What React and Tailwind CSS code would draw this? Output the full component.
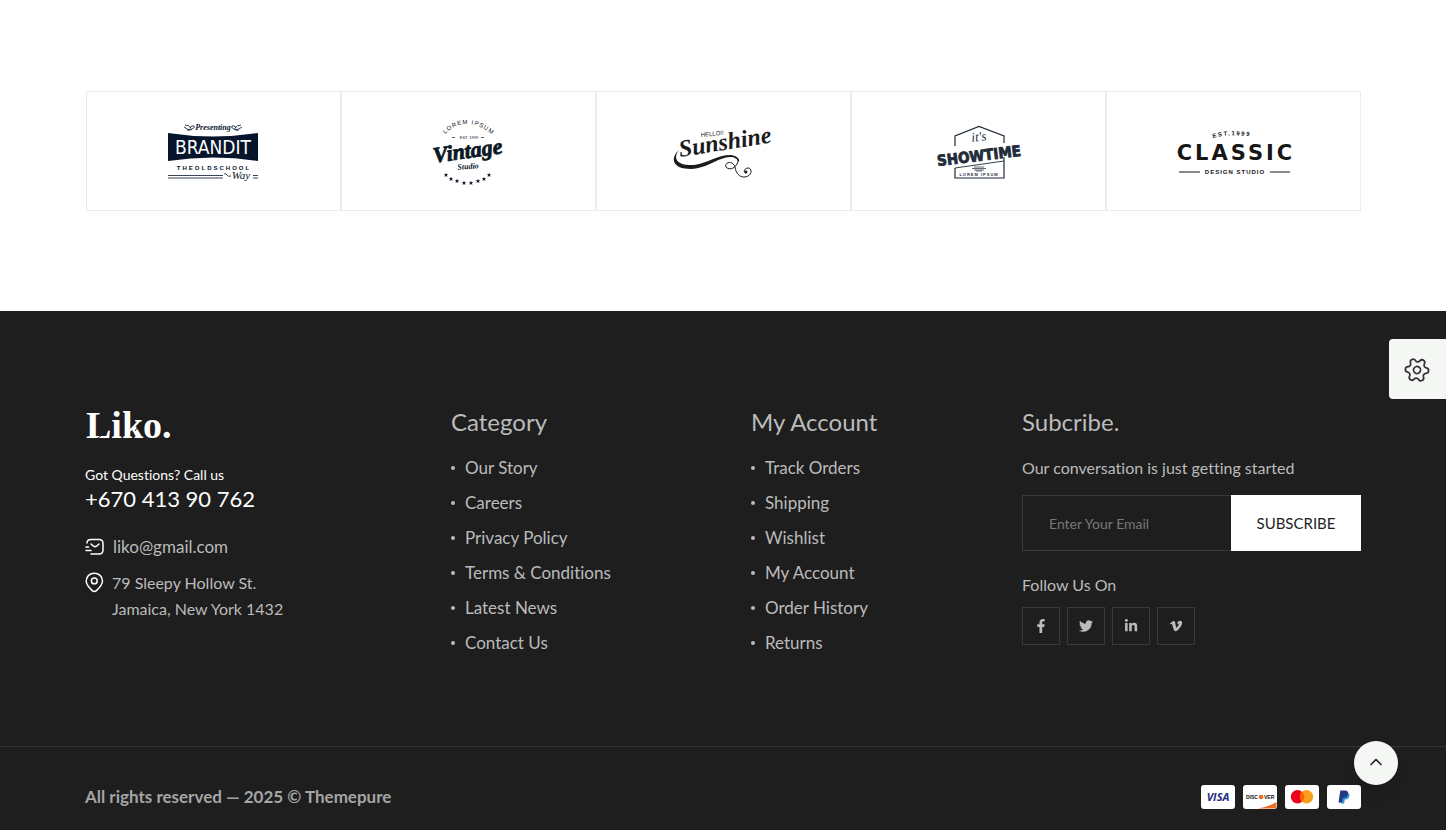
import { Settings, ChevronUp } from 'lucide-react';
import { FaFacebookF, FaTwitter, FaLinkedinIn, FaVimeoV } from 'react-icons/fa';

const categoryLinks = ['Our Story', 'Careers', 'Privacy Policy', 'Terms & Conditions', 'Latest News', 'Contact Us'];
const accountLinks = ['Track Orders', 'Shipping', 'Wishlist', 'My Account', 'Order History', 'Returns'];

const socials = [
  { label: 'Facebook', Icon: FaFacebookF },
  { label: 'Twitter', Icon: FaTwitter },
  { label: 'LinkedIn', Icon: FaLinkedinIn },
  { label: 'Vimeo', Icon: FaVimeoV },
];

const STAR = 'M0 -2.2 L0.6 -0.7 L2.2 -0.7 L1 0.3 L1.4 2 L0 1 L-1.4 2 L-1 0.3 L-2.2 -0.7 L-0.6 -0.7 Z';
const stars = [[26, 65], [31, 69], [37, 71], [44, 73], [51, 73], [58, 71], [64, 69], [69, 65]];

function BrandIt() {
  return (
    <svg width="130" height="85" viewBox="0 0 130 85" fill="#06152b">
      <text x="63" y="20" textAnchor="middle" className="font-['Liberation_Serif',serif] text-[8px] font-bold italic">Presenting</text>
      <g fill="none" stroke="#06152b" strokeWidth="0.8">
        <path d="M34 17 q4 4 8 2 q4 -2 2 -3 q-3 -1 -4 2 M35 15 q4 0 6 3 M37 20 q3 1 5 -1" />
        <path d="M92 17 q-4 4 -8 2 q-4 -2 -2 -3 q3 -1 4 2 M91 15 q-4 0 -6 3 M89 20 q-3 1 -5 -1" />
      </g>
      <path d="M18 23 Q63 30 108 23 V51 Q63 44 18 51 Z" />
      <text x="63" y="44" textAnchor="middle" fill="#fff" className="font-['DejaVu_Sans_Condensed',sans-serif] text-[19px]">BRANDIT</text>
      <text x="64" y="60" textAnchor="middle" letterSpacing="2" className="font-['Liberation_Sans',sans-serif] text-[6px] font-bold">THEOLDSCHOOL</text>
      <path d="M18 65.500 H73 M18 68 H73 M103 65.500 H108 M103 68 H108" stroke="#06152b" strokeWidth="0.8" />
      <path d="M74 64 q2 -1 3 1 q1 2 4 1" fill="none" stroke="#06152b" strokeWidth="0.8" />
      <text x="91" y="69" textAnchor="middle" className="font-['Liberation_Serif',serif] text-[11px] italic">Way</text>
    </svg>
  );
}

function Vintage() {
  return (
    <svg width="100" height="85" viewBox="0 0 100 85" fill="#0b1724">
      <defs>
        <path id="vintage-arc" d="M25 24 Q48 2 76 28" />
      </defs>
      <text letterSpacing="1" className="font-['Liberation_Sans',sans-serif] text-[6px]">
        <textPath href="#vintage-arc">LOREM IPSUM</textPath>
      </text>
      <text x="49" y="29" textAnchor="middle" className="font-['Liberation_Sans',sans-serif] text-[4px]">EST. 1999</text>
      <path d="M32 27.500 H35 M61 27.500 H64" stroke="#0b1724" strokeWidth="0.7" />
      <text x="48" y="48" textAnchor="middle" transform="rotate(-8 48 44)" stroke="#0b1724" strokeWidth="0.8" className="font-['Liberation_Serif',serif] text-[22px] font-bold italic">Vintage</text>
      <text x="48" y="59" textAnchor="middle" transform="rotate(-4 48 56)" className="font-['Liberation_Serif',serif] text-[8px] font-bold italic">Studio</text>
      {stars.map(([x, y]) => <path key={x} d={STAR} transform={`translate(${x} ${y})`} />)}
    </svg>
  );
}

function Sunshine() {
  return (
    <svg width="130" height="80" viewBox="0 0 130 80" fill="#1b1b1b">
      <text x="41" y="25" transform="rotate(-6 41 25)" className="font-['Liberation_Sans',sans-serif] text-[6px]">HELLO!!</text>
      <text x="20" y="45" transform="rotate(-9 20 45)" className="font-['Liberation_Serif',serif] text-[24px] font-bold italic">Sunshine</text>
      <path d="M19 38 C12 47 18 54 34 53 C49 51 56 43 71 43 C77 44 80 47 79 50 C77 47 75 45 70 45 C56 46 49 56 31 57 C12 57 10 46 19 38 Z" />
      <path d="M78 47 C79 54 70 60 66 55 C64 50 73 48 75 55 C76 62 80 65 84 65 C92 65 93 56 88 56 C84 56 83 61 86 61" fill="none" stroke="#1b1b1b" strokeWidth="1" />
      <circle cx="86" cy="60" r="1.400" />
    </svg>
  );
}

function Showtime() {
  return (
    <svg width="110" height="85" viewBox="0 0 110 85" fill="#1f2b3a">
      <path d="M30 36 V26 L54 16.500 L79 26 V33 M79 47 V68 H30 V58" fill="none" stroke="#1f2b3a" strokeWidth="1.200" />
      <text x="54" y="31" textAnchor="middle" transform="rotate(-6 54 28)" className="font-['Liberation_Serif',serif] text-[13px] italic">it's</text>
      <text x="54" y="51" textAnchor="middle" transform="rotate(-7 54 46)" stroke="#1f2b3a" strokeWidth="0.8" className="font-['DejaVu_Sans_Condensed',sans-serif] text-[15px] font-bold">SHOWTIME</text>
      <path d="M30 58 L79 51" fill="none" stroke="#1f2b3a" strokeWidth="0.9" />
      <path d="M47 58.500 H61 M49 57 H59 M49 60 H59 M51 61 H57" stroke="#1f2b3a" strokeWidth="0.7" />
      <text x="54" y="66" textAnchor="middle" letterSpacing="1" className="font-['Liberation_Sans',sans-serif] text-[4px] font-bold">LOREM IPSUM</text>
    </svg>
  );
}

function Classic() {
  return (
    <svg width="150" height="75" viewBox="0 0 150 75" fill="#161616">
      <defs>
        <path id="classic-arc" d="M53 23 Q74 17 104 24" />
      </defs>
      <text letterSpacing="1.500" className="font-['Liberation_Sans',sans-serif] text-[6px] font-bold">
        <textPath href="#classic-arc">EST.1999</textPath>
      </text>
      <text x="76" y="45" textAnchor="middle" letterSpacing="3" className="font-['DejaVu_Sans',sans-serif] text-[21px] font-bold">CLASSIC</text>
      <text x="75" y="59" textAnchor="middle" letterSpacing="1" className="font-['Liberation_Sans',sans-serif] text-[6px] font-bold">DESIGN STUDIO</text>
      <path d="M19 57 H40 M110 57 H130" stroke="#161616" strokeWidth="1" />
    </svg>
  );
}

const brands = [BrandIt, Vintage, Sunshine, Showtime, Classic];

function Logo() {
  return (
    <svg width="96" height="50" viewBox="0 0 96 50" role="img" aria-label="Liko.">
      <text x="1" y="40" fill="#fff" className="font-['Liberation_Serif',serif] text-[38px] font-bold">Liko.</text>
      <path d="M13 40 L25 31 M50 33 L59 22" stroke="#1e1e1e" strokeWidth="1" />
    </svg>
  );
}

function MailIcon() {
  return (
    <svg width="20" height="18" viewBox="0 0 20 18" fill="none" stroke="#fff" strokeWidth="1.500" strokeLinecap="round" strokeLinejoin="round">
      <path d="M2 5 C2 2.500 3.500 1.500 6 1.500 H14 C16.500 1.500 18 3 18 5.500 V12 C18 14.500 16.500 16 14 16 H6" />
      <path d="M14 6 L11.500 8.200 C10.700 8.800 9.400 8.800 8.600 8.200 L6 6 M1 12.500 H6 M1 9 H3.500" />
    </svg>
  );
}

function PinIcon() {
  return (
    <svg width="19" height="21" viewBox="0 0 19 21" fill="none" stroke="#fff" strokeWidth="1.500" className="mt-0.5">
      <path d="M9.300 19.500 C8.500 19.500 7.800 19.200 7.200 18.600 C3.800 15.300 1.200 12.600 1.200 8.900 C1.200 4.500 4.800 1.200 9.300 1.200 C13.800 1.200 17.500 4.500 17.500 8.900 C17.500 12.600 14.900 15.300 11.400 18.600 C10.800 19.200 10.100 19.500 9.300 19.500 Z" />
      <circle cx="9.300" cy="8.900" r="2.900" />
    </svg>
  );
}

function LinkColumn({ title, links }) {
  return (
    <div>
      <h4 className="mb-3 text-[24px] leading-8">{title}</h4>
      <ul>
        {links.map(link => (
          <li key={link} className="flex h-[35px] items-center gap-[10px]">
            <span className="h-1 w-1 rounded-full bg-[#bbb]" />
            <a href="#" className="text-[17px]">{link}</a>
          </li>
        ))}
      </ul>
    </div>
  );
}

function Payments() {
  return (
    <div className="flex gap-2">
      <svg width="34" height="24" viewBox="0 0 34 24">
        <rect width="34" height="24" rx="3" fill="#fff" />
        <text x="17" y="16" textAnchor="middle" fill="#232c81" className="font-['Open_Sans',sans-serif] text-[11px] font-bold italic">VISA</text>
      </svg>
      <svg width="34" height="24" viewBox="0 0 34 24">
        <rect width="34" height="24" rx="3" fill="#fff" />
        <path d="M15 23.500 Q27 21.500 33.500 17 V21 Q33.500 23.500 31 23.500 Z" fill="#ee6b22" />
        <text x="3" y="14" fill="#111" className="font-['Liberation_Sans',sans-serif] text-[5px] font-bold">DISC</text>
        <circle cx="18" cy="12" r="2.300" fill="#ee6b22" />
        <text x="21" y="14" fill="#111" className="font-['Liberation_Sans',sans-serif] text-[5px] font-bold">VER</text>
      </svg>
      <svg width="34" height="24" viewBox="0 0 34 24">
        <rect width="34" height="24" rx="3" fill="#fff" />
        <circle cx="12.500" cy="11.700" r="6.700" fill="#eb001b" />
        <circle cx="21.500" cy="11.700" r="6.700" fill="#f79e1b" />
        <path d="M17 6.700 A6.700 6.700 0 0 1 17 16.700 A6.700 6.700 0 0 1 17 6.700 Z" fill="#ff5f00" />
      </svg>
      <svg width="34" height="24" viewBox="0 0 34 24">
        <rect width="34" height="24" rx="3" fill="#fff" />
        <path d="M15.500 8 H20 C22.500 8 23 10 22 12.300 C21.200 14.200 19.500 14.500 17.800 14.500 L17 18.500 H13.800 Z" fill="#2997d8" />
        <path d="M13.300 5.500 H18 C20.800 5.500 21.700 7.200 21 9.500 C20.300 12 18.300 12.900 15.800 12.900 L14.800 17.500 H11.500 Z" fill="#253b80" />
      </svg>
    </div>
  );
}

export default function App() {
  return (
    <div className="min-h-screen bg-white font-['Lato',sans-serif] text-[#bbb] [font-variant-ligatures:none]">
      <section className="px-5 pt-[91px] pb-[100px]">
        <div className="mx-auto grid max-w-[1276px] grid-cols-5 pl-px">
          {brands.map((Brand, i) => (
            <div key={i} className="flex h-[120px] items-center justify-center border border-[#ececec] pt-0.5 pl-0.5">
              <Brand />
            </div>
          ))}
        </div>
      </section>

      <footer className="bg-[#1e1e1e]">
        <div className="px-5 pt-[95px] pb-[86px]">
          <div className="mx-auto grid max-w-[1276px] grid-cols-[minmax(0,366fr)_minmax(0,300fr)_minmax(0,271fr)_minmax(0,339fr)]">
            <div>
              <a href="#" className="-mt-2 block"><Logo /></a>
              <div className="mt-[15px] text-white">
                <p className="text-[14px] leading-6">Got Questions? Call us</p>
                <a href="#" className="block text-[22px] leading-6">+670 413 90 762</a>
              </div>
              <a href="#" className="mt-[23px] flex items-center gap-2 text-[17px] leading-[26px]">
                <MailIcon />
                liko@gmail.com
              </a>
              <a href="#" className="mt-[10px] flex gap-2 text-[16px] leading-[26px]">
                <PinIcon />
                <span>79 Sleepy Hollow St.<br />Jamaica, New York 1432</span>
              </a>
            </div>

            <LinkColumn title="Category" links={categoryLinks} />
            <LinkColumn title="My Account" links={accountLinks} />

            <div>
              <h4 className="mb-3 text-[24px] leading-8">Subcribe.</h4>
              <p className="text-[16px] leading-[35px]">Our conversation is just getting started</p>
              <form className="mt-[10px] flex h-14" onSubmit={(e) => e.preventDefault()}>
                <input type="email" aria-label="Email" placeholder="Enter Your Email" className="min-w-0 flex-1 border border-r-0 border-[#393939] px-[26px] text-[14px] outline-none placeholder:text-[#77787b]" />
                <button className="w-[130px] bg-white text-[15px] text-[#1e1e1e]">SUBSCRIBE</button>
              </form>
              <p className="mt-5 text-[16px] leading-7">Follow Us On</p>
              <div className="mt-2 flex gap-[7px]">
                {socials.map(({ label, Icon }) => (
                  <a key={label} href="#" aria-label={label} className="flex h-[38px] w-[38px] items-center justify-center border border-[#393939] text-[14px]">
                    <Icon />
                  </a>
                ))}
              </div>
            </div>
          </div>
        </div>

        <div className="border-t border-[#343434] px-5 pt-9 pb-[19px]">
          <div className="mx-auto flex max-w-[1276px] items-center justify-between">
            <p className="text-[17px] leading-7 font-bold text-[#a5a5a5]">All rights reserved — 2025 © Themepure</p>
            <Payments />
          </div>
        </div>
      </footer>

      <button aria-label="Settings" className="fixed top-[339px] right-0 flex h-[60px] w-[57px] items-center justify-center rounded-l bg-[#f5f7f5] pt-0.5 pr-0.5 text-[#333]">
        <Settings size={28} strokeWidth={1.5} className="rotate-[34deg]" />
      </button>
      <button aria-label="Back to top" className="fixed right-12 bottom-[45px] flex h-11 w-11 items-center justify-center rounded-full bg-[#f5f7f5] pb-0.5 text-[#1e1e1e] shadow-lg">
        <ChevronUp size={20} strokeWidth={2} />
      </button>
    </div>
  );
}
